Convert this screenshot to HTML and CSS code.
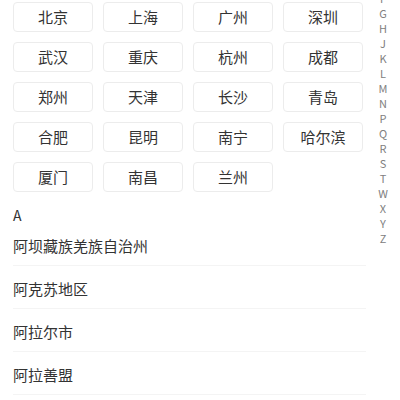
FILE: index.html
```html
<!DOCTYPE html>
<html lang="zh-CN">
<head>
  <meta charset="UTF-8">
  <meta name="viewport" content="width=device-width, initial-scale=1.0">
  <title>选择城市</title>
  <link rel="stylesheet" href="styles.css">
</head>
<body>
  <div class="page">
    <div class="hot-grid">
      <div class="hot-btn">北京</div>
      <div class="hot-btn">上海</div>
      <div class="hot-btn">广州</div>
      <div class="hot-btn">深圳</div>
      <div class="hot-btn">武汉</div>
      <div class="hot-btn">重庆</div>
      <div class="hot-btn">杭州</div>
      <div class="hot-btn">成都</div>
      <div class="hot-btn">郑州</div>
      <div class="hot-btn">天津</div>
      <div class="hot-btn">长沙</div>
      <div class="hot-btn">青岛</div>
      <div class="hot-btn">合肥</div>
      <div class="hot-btn">昆明</div>
      <div class="hot-btn">南宁</div>
      <div class="hot-btn">哈尔滨</div>
      <div class="hot-btn">厦门</div>
      <div class="hot-btn">南昌</div>
      <div class="hot-btn">兰州</div>
    </div>

    <div class="group-title">A</div>
    <ul class="city-list">
      <li>阿坝藏族羌族自治州</li>
      <li>阿克苏地区</li>
      <li>阿拉尔市</li>
      <li>阿拉善盟</li>
    </ul>
  </div>

  <!-- 字母索引，列表滚动后顶部几个字母在屏幕外 -->
  <ul class="index-bar">
    <li>A</li><li>B</li><li>C</li><li>D</li><li>E</li><li>F</li>
    <li>G</li><li>H</li><li>J</li><li>K</li><li>L</li><li>M</li>
    <li>N</li><li>P</li><li>Q</li><li>R</li><li>S</li><li>T</li>
    <li>W</li><li>X</li><li>Y</li><li>Z</li>
  </ul>
</body>
</html>
```

FILE: styles.css
```css
* {
  margin: 0;
  padding: 0;
  box-sizing: border-box;
}

body {
  background: #fff;
  font-family: "Noto Sans CJK SC", "Noto Sans", sans-serif;
  color: #333;
  overflow: hidden;
}

.page {
  padding: 2px 34px 0 13px;
}

.hot-grid {
  display: grid;
  grid-template-columns: repeat(4, 80px);
  gap: 10px;
}

.hot-btn {
  height: 30px;
  line-height: 28px;
  border: 1px solid #ececec;
  border-radius: 4px;
  text-align: center;
  font-size: 15px;
}

.group-title {
  margin-top: 15px;
  line-height: 16px;
  font-size: 14px;
}

.city-list {
  list-style: none;
}

.city-list li {
  padding-top: 4px;
  line-height: 38px;
  font-size: 15px;
  border-bottom: 1px solid #f4f4f4;
}

.index-bar {
  position: absolute;
  top: -84px;
  right: 10px;
  width: 14px;
  list-style: none;
  text-align: center;
}

.index-bar li {
  height: 15px;
  line-height: 15px;
  font-size: 11px;
  color: #808080;
}
```
